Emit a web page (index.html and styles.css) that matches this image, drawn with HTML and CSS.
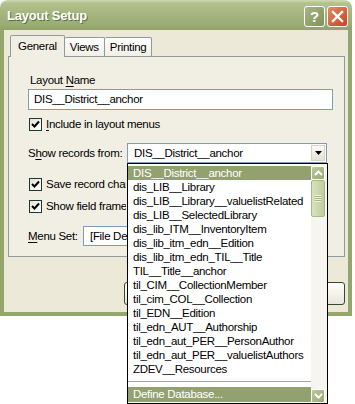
FILE: index.html
```html
<!DOCTYPE html>
<html lang="en">
<head>
    <meta charset="UTF-8">
    <title>Layout Setup</title>
    <link rel="stylesheet" href="styles.css">
</head>
<body>

<div class="window">
    <div class="titlebar">
        <span class="title">Layout Setup</span>
        <div class="title-buttons">
            <span class="tbtn help">?</span>
            <span class="tbtn close">
                <svg width="13" height="13" viewBox="0 0 13 13"><path d="M2 2 L11 11 M11 2 L2 11" stroke="#fff" stroke-width="2.4" stroke-linecap="square"/></svg>
            </span>
        </div>
    </div>

    <div class="frame">
        <div class="tabs">
            <span class="tab active">General</span>
            <span class="tab">Views</span>
            <span class="tab">Printing</span>
        </div>

        <div class="panel">
            <div class="label">Layout <u>N</u>ame</div>
            <div class="textbox">DIS__District__anchor</div>

            <div class="check first">
                <span class="box"><svg width="9" height="9" viewBox="0 0 9 9"><path d="M1 4 L3.5 6.5 L8 1.5" fill="none" stroke="#000" stroke-width="2"/></svg></span>
                <span><u>I</u>nclude in layout menus</span>
            </div>

            <div class="row records">
                <span class="row-label">S<u>h</u>ow records from:</span>
                <div class="select wide">
                    <span class="select-text">DIS__District__anchor</span>
                    <span class="arrow"><svg width="7" height="4" viewBox="0 0 7 4"><path d="M0 0 H7 L3.5 4 Z" fill="#000"/></svg></span>

                    <!-- open list of the select -->
                    <div class="list">
                        <div class="items">
                            <div class="item selected">DIS__District__anchor</div>
                            <div class="item">dis_LIB__Library</div>
                            <div class="item">dis_LIB__Library__valuelistRelated</div>
                            <div class="item">dis_LIB__SelectedLibrary</div>
                            <div class="item">dis_lib_ITM__InventoryItem</div>
                            <div class="item">dis_lib_itm_edn__Edition</div>
                            <div class="item">dis_lib_itm_edn_TIL__Title</div>
                            <div class="item">TIL__Title__anchor</div>
                            <div class="item">til_CIM__CollectionMember</div>
                            <div class="item">til_cim_COL__Collection</div>
                            <div class="item">til_EDN__Edition</div>
                            <div class="item">til_edn_AUT__Authorship</div>
                            <div class="item">til_edn_aut_PER__PersonAuthor</div>
                            <div class="item">til_edn_aut_PER__valuelistAuthors</div>
                            <div class="item">ZDEV__Resources</div>
                            <div class="separator"></div>
                            <div class="item define">Define Database...</div>
                        </div>
                        <div class="scrollbar">
                            <span class="sbtn"><svg width="9" height="6" viewBox="0 0 9 6"><path d="M1 5 L4.5 1.5 L8 5" fill="none" stroke="#fff" stroke-width="2"/></svg></span>
                            <span class="thumb"><span class="grip"></span></span>
                            <span class="track"></span>
                            <span class="sbtn"><svg width="9" height="6" viewBox="0 0 9 6"><path d="M1 1 L4.5 4.5 L8 1" fill="none" stroke="#fff" stroke-width="2"/></svg></span>
                        </div>
                    </div>
                </div>
            </div>

            <!-- these labels run under the open list, so they are cut where it starts -->
            <div class="check save">
                <span class="box"><svg width="9" height="9" viewBox="0 0 9 9"><path d="M1 4 L3.5 6.5 L8 1.5" fill="none" stroke="#000" stroke-width="2"/></svg></span>
                <span class="cut"><u>S</u>ave record changes automatically</span>
            </div>

            <div class="check frames">
                <span class="box"><svg width="9" height="9" viewBox="0 0 9 9"><path d="M1 4 L3.5 6.5 L8 1.5" fill="none" stroke="#000" stroke-width="2"/></svg></span>
                <span class="cut">Show field <u>f</u>rames when record is active</span>
            </div>

            <div class="row menuset">
                <span class="row-label short"><u>M</u>enu Set:</span>
                <div class="select narrow">
                    <span class="select-text cut-short">[File Default]</span>
                </div>
            </div>
        </div>

        <div class="buttons">
            <span class="button"></span>
            <span class="button"></span>
        </div>
    </div>
</div>

</body>
</html>
```

FILE: styles.css
```css
body {
    margin: 0;
    min-height: 404px;
    background-color: #fff;
    font-family: "Liberation Sans", Arial, sans-serif;
    font-size: 11.5px;
    letter-spacing: -0.3px;
    color: #000;
}

u {
    text-decoration-thickness: 1px;
    text-underline-offset: 2px;
}

.window {
    width: 352px;
}

.titlebar {
    height: 30px;
    display: flex;
    align-items: center;
    justify-content: space-between;
    padding: 0 4px 0 7px;
    border-radius: 8px 8px 0 0;
    background: linear-gradient(#cfdab4 0px, #b3c38f 3px, #a6b781 12px, #9aad74 24px, #90a46a 30px);
    box-sizing: border-box;
}

.title {
    color: #fff;
    font-weight: bold;
    font-size: 13px;
    letter-spacing: -0.2px;
    text-shadow: 1px 1px 0 #5f7040;
}

.title-buttons {
    display: flex;
    gap: 2px;
    margin-top: 2px;
}

.tbtn {
    width: 19px;
    height: 19px;
    display: flex;
    align-items: center;
    justify-content: center;
    border: 1px solid #fff;
    border-radius: 3px;
    color: #fff;
    font-weight: bold;
    font-size: 15px;
    letter-spacing: 0;
}

.help {
    background: linear-gradient(135deg, #a7b783, #7f9258);
}

.close {
    background: linear-gradient(135deg, #e58a66, #c8421f);
}

.frame {
    height: 286px;
    background-color: #ece9d8;
    border: solid #93a76d;
    border-width: 0 4px 4px 4px;
    box-sizing: border-box;
}

.tabs {
    display: flex;
    align-items: flex-end;
    height: 26px;
    padding-left: 6px;
}

.tab {
    height: 18px;
    line-height: 18px;
    padding: 0 5px;
    border: 1px solid #919b9c;
    border-bottom: none;
    border-left: none;
    background: linear-gradient(#fefefe, #f1efe6);
    border-radius: 2px 2px 0 0;
}

.tab.active {
    height: 21px;
    line-height: 20px;
    padding: 0 7px;
    border-left: 1px solid #919b9c;
    background-color: #f1efe4;
    background-image: none;
    margin-bottom: -1px;
    position: relative;
    z-index: 1;
}

.panel {
    margin: 0 3px 0 4px;
    height: 201px;
    padding: 16px 0 0 19px;
    border: 1px solid #919b9c;
    background-color: #f1efe4;
    box-sizing: border-box;
}

.label {
    line-height: 15px;
    padding-left: 2px;
}

.textbox {
    width: 305px;
    height: 21px;
    margin-top: 1px;
    padding-left: 5px;
    line-height: 19px;
    border: 1px solid #7f9db9;
    background-color: #fff;
    box-sizing: border-box;
}

.check {
    display: flex;
    align-items: center;
    height: 14px;
    gap: 4px;
    padding-left: 1px;
    white-space: nowrap;
}

.check.first {
    margin-top: 7px;
}

.check.save {
    margin-top: 14px;
}

.check.frames {
    margin-top: 8px;
}

.cut {
    max-width: 80px;
    overflow: hidden;
}

.cut-short {
    max-width: 37px;
    overflow: hidden;
    white-space: nowrap;
}

.box {
    width: 13px;
    height: 13px;
    display: flex;
    align-items: center;
    justify-content: center;
    border: 1px solid #1c3a24;
    background: linear-gradient(135deg, #e3e2da, #fff);
    box-sizing: border-box;
}

.row {
    display: flex;
    align-items: center;
    height: 20px;
    white-space: nowrap;
}

.row.records {
    margin-top: 12px;
}

.row.menuset {
    margin-top: 13px;
}

.row-label {
    width: 99px;
}

.row-label.short {
    width: 55px;
}

.select {
    position: relative;
    height: 20px;
    display: flex;
    align-items: center;
    border: 1px solid #7f9db9;
    background-color: #fff;
    box-sizing: border-box;
}

.select.wide {
    width: 200px;
}

.select.narrow {
    width: 180px;
}

.select-text {
    padding-left: 6px;
    flex: 1;
}

.arrow {
    width: 14px;
    height: 16px;
    margin-right: 1px;
    display: flex;
    align-items: center;
    justify-content: center;
    background: linear-gradient(#fbfbf8, #e4e2d6);
    border: 1px solid #d6d3c3;
    box-sizing: border-box;
}

/* the open drop-down list */
.list {
    position: absolute;
    left: -1px;
    top: 19px;
    width: 201px;
    height: 241px;
    display: flex;
    border: 1px solid #000;
    background-color: #fff;
    box-sizing: border-box;
    z-index: 5;
}

.items {
    flex: 1;
    padding-top: 2px;
}

.item {
    height: 14px;
    line-height: 14px;
    padding-left: 5px;
    white-space: nowrap;
}

.item.selected,
.item.define {
    background-color: #93a16e;
    color: #fff;
}

.item.define {
    height: 15px;
    line-height: 15px;
}

.separator {
    height: 1px;
    margin: 5px 0 5px 0;
    background-color: #a6a6a0;
}

.scrollbar {
    width: 15px;
    display: flex;
    flex-direction: column;
    padding: 2px 1px 0 0;
    background-color: #f6f5ef;
}

.sbtn {
    width: 14px;
    height: 14px;
    display: flex;
    align-items: center;
    justify-content: center;
    border: 1px solid #fff;
    border-radius: 2px;
    background: linear-gradient(135deg, #bcc99c, #98a874);
    box-sizing: border-box;
}

.thumb {
    width: 14px;
    height: 37px;
    display: flex;
    align-items: center;
    justify-content: center;
    border: 1px solid #a9b88a;
    border-radius: 2px;
    background: linear-gradient(90deg, #d8e2bd, #c0cd9d);
    box-sizing: border-box;
}

.grip {
    width: 6px;
    height: 7px;
    background: repeating-linear-gradient(#eef3e0 0 1px, #a6b582 1px 2px);
}

.track {
    flex: 1;
}

.buttons {
    display: flex;
    justify-content: space-between;
    padding: 25px 3px 0 120px;
}

.button {
    height: 23px;
    width: 75px;
    border: 1px solid #374a26;
    border-radius: 3px;
    background: linear-gradient(#fff, #e8e6da);
    box-sizing: border-box;
}
```
